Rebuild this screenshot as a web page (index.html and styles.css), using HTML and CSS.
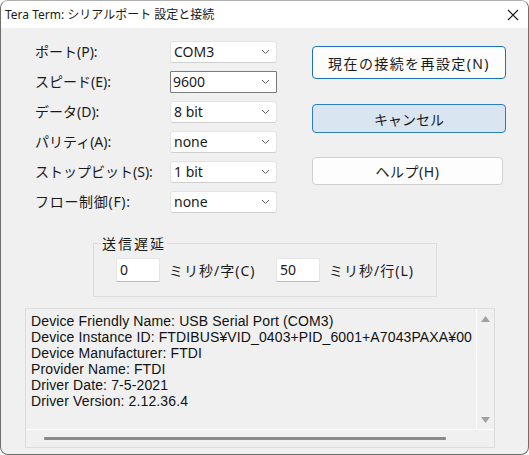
FILE: index.html
```html
<!DOCTYPE html>
<html lang="ja">
<head>
<meta charset="utf-8">
<link rel="stylesheet" href="styles.css">
</head>
<body>
<div class="window">
  <div class="titlebar">
    <span class="title">Tera Term: シリアルポート 設定と接続</span>
    <svg class="close" width="12" height="12" viewBox="0 0 12 12"><path d="M1 1 L11 11 M11 1 L1 11" stroke="#1a1a1a" stroke-width="1.1" fill="none"/></svg>
  </div>
  <div class="content">
    <div class="main">
      <div class="form">
        <label class="lbl">ポート(P):</label>
        <div class="combo"><span>COM3</span><svg class="chev" width="9" height="6" viewBox="0 0 9 6"><path d="M1 1 L4.5 4.5 L8 1" stroke="#606060" stroke-width="1" fill="none"/></svg></div>
        <label class="lbl">スピード(E):</label>
        <div class="combo focus"><span>9600</span><svg class="chev" width="9" height="6" viewBox="0 0 9 6"><path d="M1 1 L4.5 4.5 L8 1" stroke="#606060" stroke-width="1" fill="none"/></svg></div>
        <label class="lbl">データ(D):</label>
        <div class="combo"><span>8 bit</span><svg class="chev" width="9" height="6" viewBox="0 0 9 6"><path d="M1 1 L4.5 4.5 L8 1" stroke="#606060" stroke-width="1" fill="none"/></svg></div>
        <label class="lbl">パリティ(A):</label>
        <div class="combo"><span>none</span><svg class="chev" width="9" height="6" viewBox="0 0 9 6"><path d="M1 1 L4.5 4.5 L8 1" stroke="#606060" stroke-width="1" fill="none"/></svg></div>
        <label class="lbl">ストップビット(S):</label>
        <div class="combo"><span>1 bit</span><svg class="chev" width="9" height="6" viewBox="0 0 9 6"><path d="M1 1 L4.5 4.5 L8 1" stroke="#606060" stroke-width="1" fill="none"/></svg></div>
        <label class="lbl kanji">フロー制御(F):</label>
        <div class="combo"><span>none</span><svg class="chev" width="9" height="6" viewBox="0 0 9 6"><path d="M1 1 L4.5 4.5 L8 1" stroke="#606060" stroke-width="1" fill="none"/></svg></div>
      </div>
      <div class="actions">
        <div class="btn primary">現在の接続を再設定(N)</div>
        <div class="btn cancel">キャンセル</div>
        <div class="btn plain">ヘルプ(H)</div>
      </div>
    </div>
    <fieldset class="delay">
      <legend>送信遅延</legend>
      <div class="delay-row">
        <div class="num">0</div>
        <span class="unit">ミリ秒/字(C)</span>
        <div class="num">50</div>
        <span class="unit">ミリ秒/行(L)</span>
      </div>
    </fieldset>
    <div class="listbox">
      <div class="list-inner">
        <div class="lines">
          <div>Device Friendly Name: USB Serial Port (COM3)</div>
          <div>Device Instance ID: FTDIBUS¥VID_0403+PID_6001+A7043PAXA¥00</div>
          <div>Device Manufacturer: FTDI</div>
          <div>Provider Name: FTDI</div>
          <div>Driver Date: 7-5-2021</div>
          <div>Driver Version: 2.12.36.4</div>
        </div>
        <div class="vscroll">
          <svg width="9" height="6" viewBox="0 0 9 6"><path d="M0 6 L4.5 0 L9 6 Z" fill="#a0a0a0"/></svg>
          <svg width="9" height="6" viewBox="0 0 9 6"><path d="M0 0 L4.5 6 L9 0 Z" fill="#a0a0a0"/></svg>
        </div>
      </div>
      <div class="hscroll"><div class="thumb"></div></div>
    </div>
  </div>
</div>
</body>
</html>
```
FILE: styles.css
```css
* { box-sizing: border-box; }
html, body { margin: 0; padding: 0; background: #ffffff; }
body {
  font-family: "Noto Sans", "Noto Sans CJK JP", sans-serif;
  color: #1a1a1a;
}
.window {
  width: 529px;
  height: 455px;
  border: 1px solid #6e6e6e;
  border-top-color: #b0b0b0;
  border-radius: 8px;
  background: #f0f0f0;
  overflow: hidden;
  display: flex;
  flex-direction: column;
}
.titlebar {
  height: 27px;
  background: #ffffff;
  display: flex;
  align-items: center;
  justify-content: space-between;
  padding: 0 9px 0 4px;
  flex-shrink: 0;
}
.title {
  font-size: 12px;
  line-height: 16px;
  color: #1a1a1a;
}
.close { display: block; }
.content {
  flex: 1;
  display: flex;
  flex-direction: column;
}
.main {
  display: flex;
  padding: 13px 0 0 34px;
}
.form {
  display: grid;
  grid-template-columns: 135px 107px;
  grid-auto-rows: 22px;
  row-gap: 8px;
}
.lbl {
  font-size: 14px;
  line-height: 22px;
  display: flex;
  align-items: center;
  white-space: nowrap;
}
.lbl.kanji { letter-spacing: 0.7px; }
.combo {
  background: #ffffff;
  border: 1px solid #e3e3e3;
  border-bottom-color: #cfcfcf;
  border-radius: 3px;
  display: flex;
  align-items: center;
  justify-content: space-between;
  padding: 0 6px 0 3px;
  font-size: 14px;
  line-height: 20px;
}
.combo.focus {
  border: 1px solid #7a7a7a;
  border-radius: 1px;
  padding-left: 2px;
}
.chev { display: block; }
.actions {
  margin-left: 35px;
  padding-top: 5px;
  display: flex;
  flex-direction: column;
  width: 194px;
}
.btn {
  display: flex;
  align-items: center;
  justify-content: center;
  font-size: 14px;
  border-radius: 4px;
  background: #fdfdfd;
}
.btn.primary {
  height: 33px;
  border: 1px solid #1a73b8;
  letter-spacing: 1.4px;
}
.btn.cancel {
  margin-top: 25px;
  height: 29px;
  background: #d9e6f2;
  border: 1px solid #2b7cc0;
}
.btn.plain {
  margin-top: 24px;
  height: 28px;
  width: 191px;
  border: 1px solid #d0d0d0;
  letter-spacing: 0.5px;
}
.delay {
  margin: 22px 0 0 92px;
  width: 342px;
  height: 62px;
  border: 1px solid #dcdcdc;
  padding: 6px 0 0 7px;
}
.delay legend {
  font-size: 14px;
  line-height: 17px;
  padding: 0 1px;
  letter-spacing: 2px;
}
.delay-row {
  display: flex;
  align-items: center;
  margin-left: 15px;
}
.num {
  width: 44px;
  height: 24px;
  background: #ffffff;
  border: 1px solid #e6e6e6;
  border-bottom-color: #bdbdbd;
  font-size: 14px;
  line-height: 22px;
  padding-left: 3px;
}
.unit {
  font-size: 14px;
  margin-left: 9px;
  width: 107px;
  letter-spacing: 1px;
}
.listbox {
  margin: 11px 0 0 24px;
  width: 470px;
  height: 140px;
  border: 1px solid #dcdcdc;
  display: flex;
  flex-direction: column;
}
.list-inner {
  height: 121px;
  display: flex;
  border-bottom: 1px solid #ffffff;
}
.lines {
  flex: 1;
  border-right: 1px solid #ffffff;
  padding: 4px 0 0 5px;
  font-family: "Liberation Sans", "Noto Sans CJK JP", sans-serif;
  font-size: 14px;
  line-height: 16px;
  letter-spacing: 0.12px;
  color: #111;
  white-space: nowrap;
  overflow: hidden;
}
.vscroll {
  width: 17px;
  display: flex;
  flex-direction: column;
  justify-content: space-between;
  align-items: center;
  padding: 7px 0 6px;
}
.vscroll svg { display: block; }
.hscroll {
  flex: 1;
  display: flex;
  align-items: center;
  padding-left: 18px;
}
.thumb {
  width: 402px;
  height: 3px;
  background: #8a8a8a;
  border-radius: 1px;
}
```
